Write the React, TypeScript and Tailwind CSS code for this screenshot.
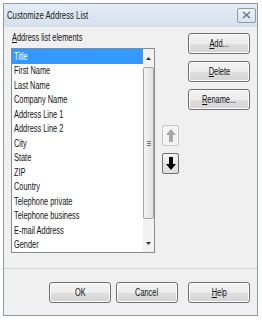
import React from "react";

const items = [
  "Title",
  "First Name",
  "Last Name",
  "Company Name",
  "Address Line 1",
  "Address Line 2",
  "City",
  "State",
  "ZIP",
  "Country",
  "Telephone private",
  "Telephone business",
  "E-mail Address",
  "Gender",
];

const font = { fontFamily: '"Liberation Sans", Arial, sans-serif' };

function T({ children, center = false }: { children: React.ReactNode; center?: boolean }) {
  return (
    <span
      className={
        "inline-block whitespace-nowrap scale-x-[0.74] " + (center ? "origin-center" : "origin-left")
      }
    >
      {children}
    </span>
  );
}

function U({ children }: { children: React.ReactNode }) {
  return <span className="underline decoration-[0.5px] underline-offset-[1px]">{children}</span>;
}

function Btn({ children, className = "" }: { children: React.ReactNode; className?: string }) {
  return (
    <div
      className={
        "flex h-[21px] w-[62px] items-center justify-center rounded-[3px] border border-[#707070] bg-[linear-gradient(#f4f4f4_0%,#ececec_50%,#dfdfdf_51%,#d4d4d4_100%)] text-[10px] leading-none text-[#111] shadow-[inset_0_0_0_1px_#fcfcfc] " +
        className
      }
    >
      <T center>{children}</T>
    </div>
  );
}

export default function App() {
  return (
    <div className="h-[320px] w-[262px] bg-white pl-[3px] pt-[3px]" style={font}>
      <div className="flex h-[313px] w-[255px] flex-col border border-[#8e9aa8]">
        {/* title bar */}
        <div className="flex h-[23px] items-center justify-between bg-[linear-gradient(#e4ecf5,#d6e1ee)] pl-[3px] pr-[1px]">
          <span className="text-[10.5px] text-[#1b1b1b]">
            <T>Customize Address List</T>
          </span>
          <div className="mb-[1px] flex h-[15px] w-[19px] items-center justify-center rounded-[2px] border border-[#8d9bab] bg-[linear-gradient(#eef3f8,#d8e2ec)]">
            <svg width="9" height="8" viewBox="0 0 9 8">
              <path d="M1 1 L8 7 M8 1 L1 7" stroke="#6a7888" strokeWidth="1.6" fill="none" />
            </svg>
          </div>
        </div>
        {/* client */}
        <div className="flex flex-1 flex-col bg-[#f0f0f0]">
          <div className="flex h-[241px] items-start pt-[6px]">
            {/* left column */}
            <div className="ml-[7px] flex w-[144px] flex-col">
              <div className="-mt-[1px] ml-[1px] h-[12px] text-[10px] leading-[12px] text-[#111]">
                <T>
                  <U>A</U>ddress list elements
                </T>
              </div>
              <div className="mt-[4px] flex h-[205px] border border-[#8b8b8b] bg-white">
                <div className="flex flex-1 flex-col">
                  {items.map((it, i) => (
                    <div
                      key={it}
                      className={
                        "flex h-[14.5px] items-center pl-[2px] text-[10px] " +
                        (i === 0 ? "bg-[#3399ff] text-white" : "text-[#111]")
                      }
                    >
                      <T>{it}</T>
                    </div>
                  ))}
                </div>
                {/* scrollbar */}
                <div className="flex w-[11px] flex-col bg-[#f2f2f2]">
                  <div className="flex h-[18px] items-center justify-center">
                    <svg width="5" height="3" viewBox="0 0 5 3">
                      <path d="M0 3 L2.5 0 L5 3 Z" fill="#333" />
                    </svg>
                  </div>
                  <div className="flex h-[152px] items-center justify-center rounded-[2px] border border-[#a3a3a3] bg-[linear-gradient(90deg,#f3f3f3,#e2e2e2)]">
                    <div className="flex flex-col gap-[1px]">
                      <div className="h-px w-[4px] bg-[#777]" />
                      <div className="h-px w-[4px] bg-[#777]" />
                      <div className="h-px w-[4px] bg-[#777]" />
                    </div>
                  </div>
                  <div className="flex-1" />
                  <div className="flex h-[18px] items-center justify-center">
                    <svg width="5" height="3" viewBox="0 0 5 3">
                      <path d="M0 0 L2.5 3 L5 0 Z" fill="#333" />
                    </svg>
                  </div>
                </div>
              </div>
            </div>
            {/* arrow buttons */}
            <div className="ml-[7px] mt-[92px] flex w-[17px] flex-col gap-[7px]">
              <div className="flex h-[21px] items-center justify-center rounded-[2px] border border-[#c9c9c9] bg-[#f4f4f4]">
                <svg width="10" height="13" viewBox="0 0 10 13">
                  <path d="M5 0 L10 6 L7 6 L7 13 L3 13 L3 6 L0 6 Z" fill="#a8a8a8" />
                </svg>
              </div>
              <div className="flex h-[21px] items-center justify-center rounded-[2px] border border-[#707070] bg-[linear-gradient(#f4f4f4,#dcdcdc)]">
                <svg width="10" height="13" viewBox="0 0 10 13">
                  <path d="M5 13 L10 7 L7 7 L7 0 L3 0 L3 7 L0 7 Z" fill="#000" />
                </svg>
              </div>
            </div>
            {/* push buttons */}
            <div className="ml-[9px] flex flex-col gap-[7px]">
              <Btn>
                <U>A</U>dd...
              </Btn>
              <Btn>
                <U>D</U>elete
              </Btn>
              <Btn>
                <U>R</U>ename...
              </Btn>
            </div>
          </div>
          <div className="h-px bg-[#d7d7d7]" />
          <div className="flex flex-1 items-start justify-end pr-[7px] pt-[13px]">
            <Btn>OK</Btn>
            <Btn className="ml-[5px]">Cancel</Btn>
            <Btn className="ml-[10px]">
              <U>H</U>elp
            </Btn>
          </div>
        </div>
      </div>
    </div>
  );
}
